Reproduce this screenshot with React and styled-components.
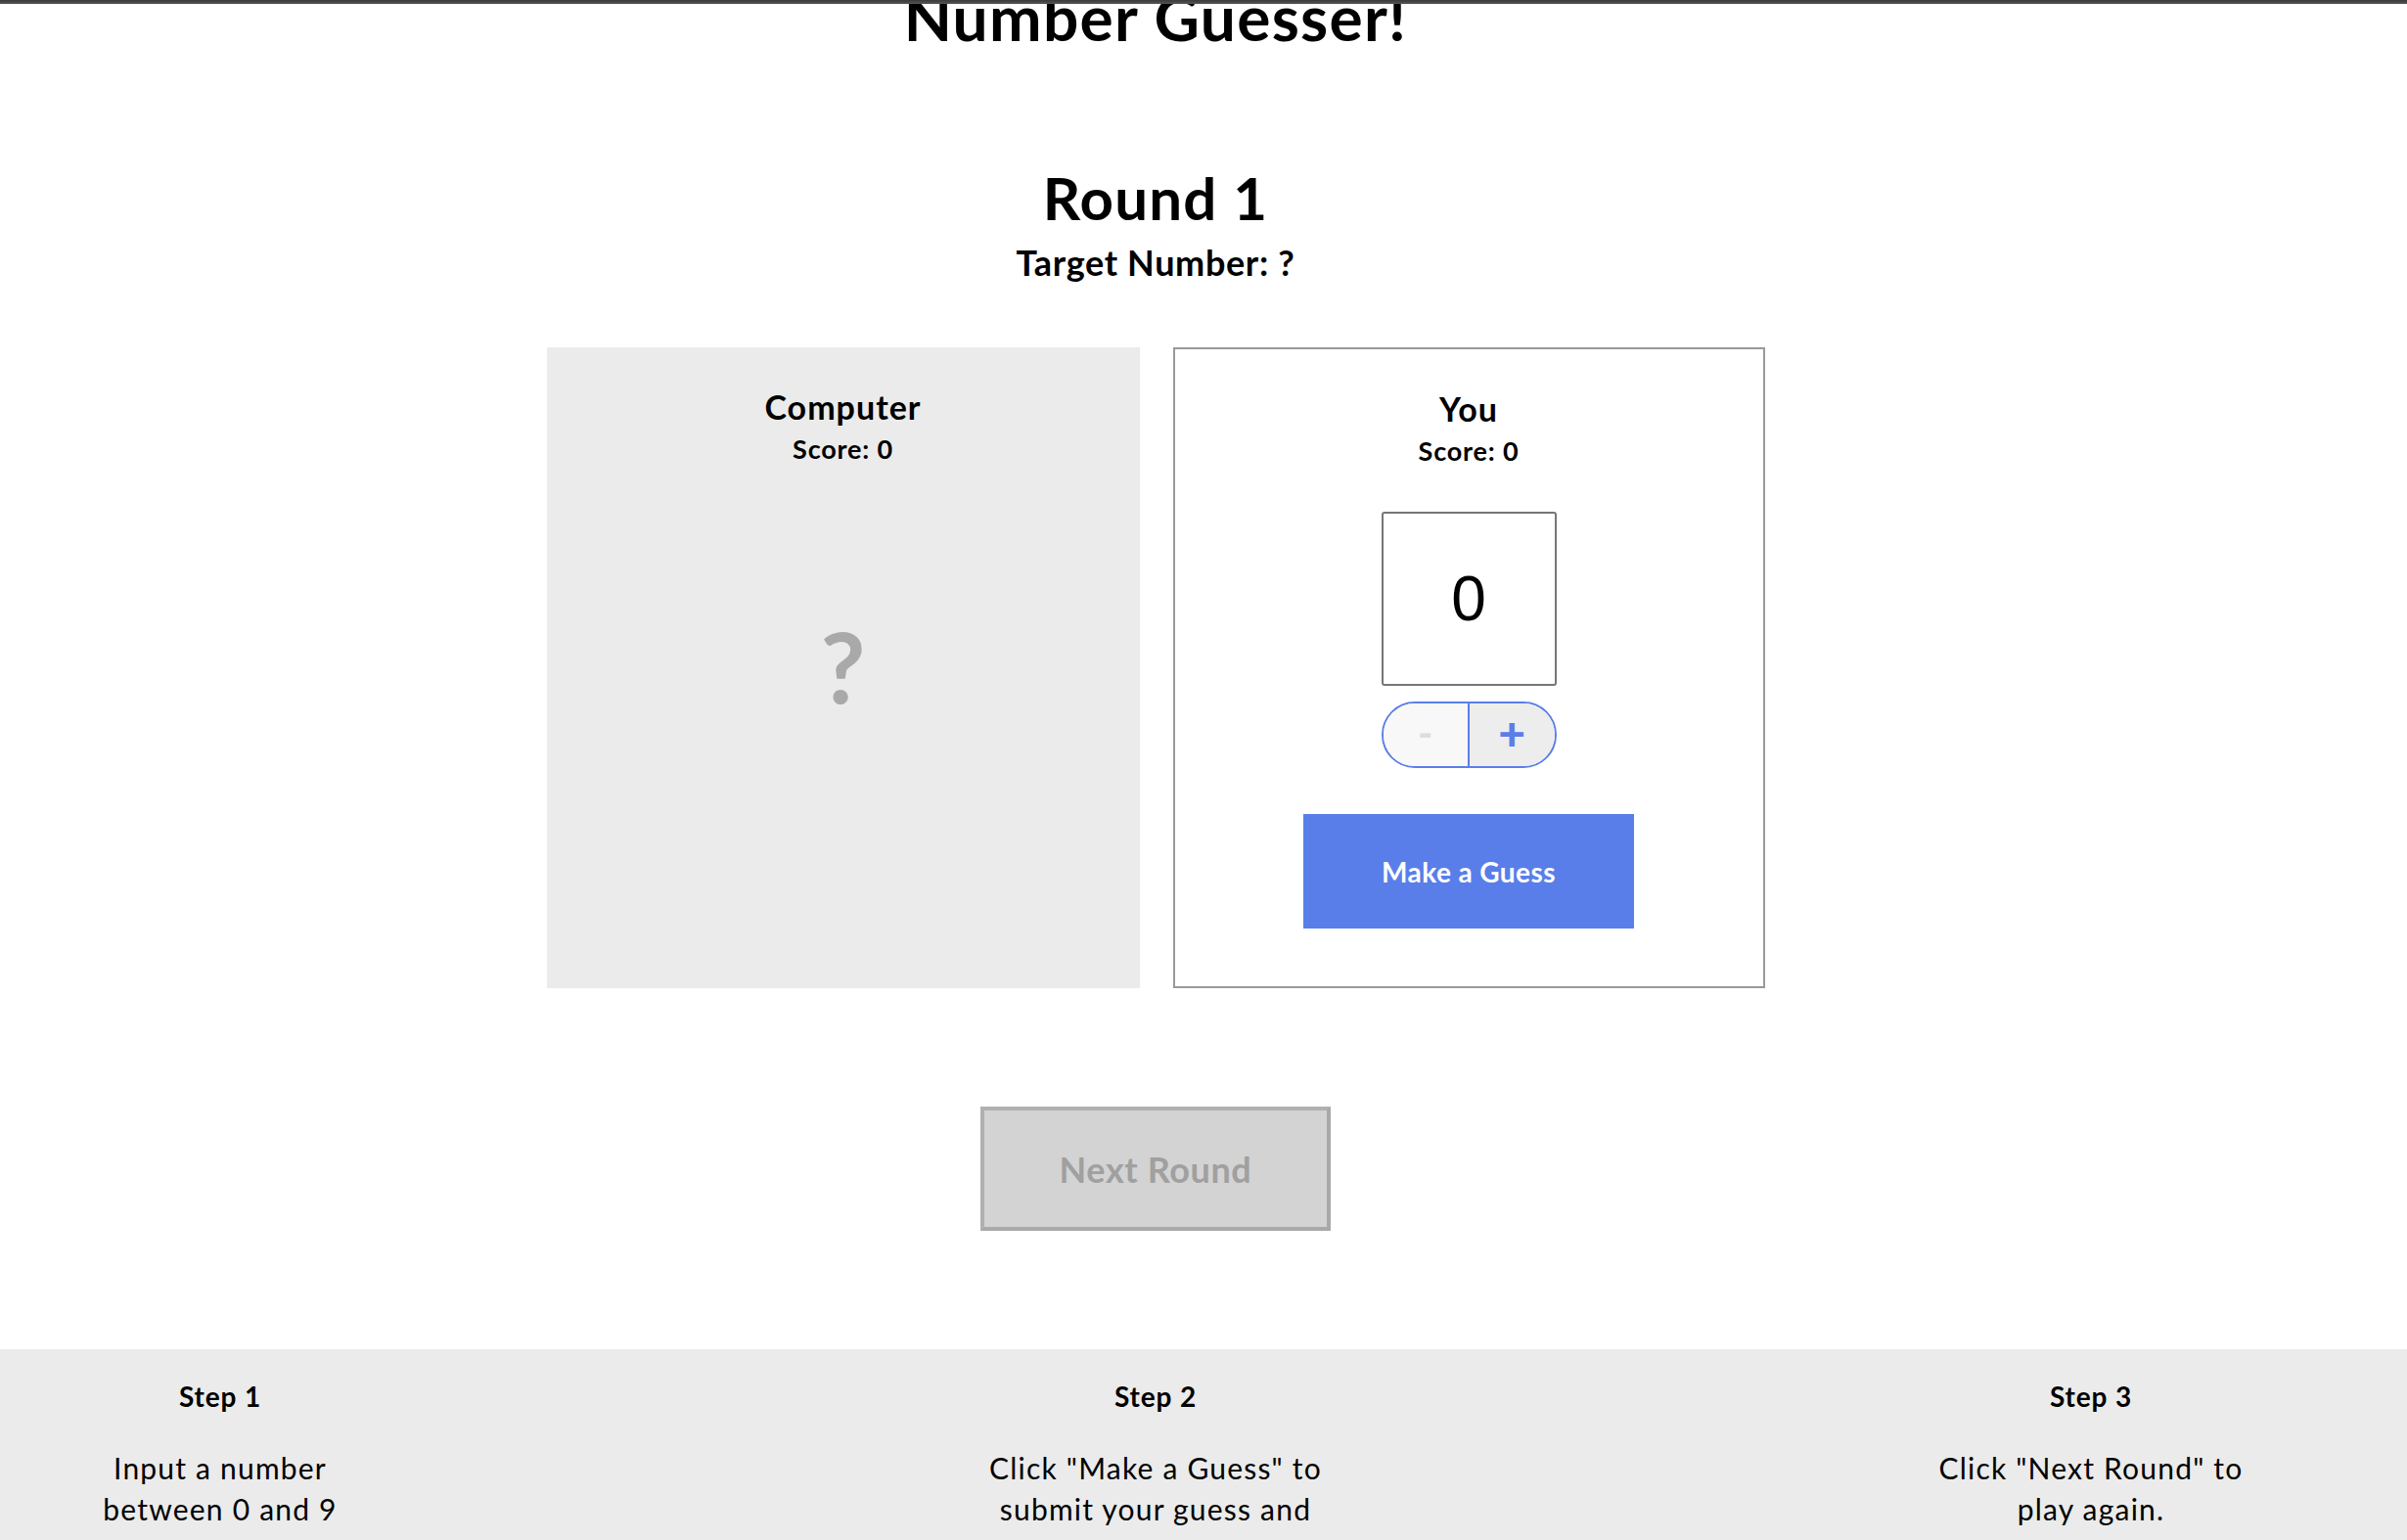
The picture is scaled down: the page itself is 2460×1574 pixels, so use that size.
import React from "react";
import styled, { createGlobalStyle } from "styled-components";

const GlobalStyle = createGlobalStyle`
  html, body {
    margin: 0;
    padding: 0;
    background: #ffffff;
    overflow: hidden;
  }
  body {
    font-family: "Lato", "Noto Sans", sans-serif;
    color: #000;
  }
  * { box-sizing: border-box; }
`;

const TopBar = styled.div`
  position: fixed;
  top: 0;
  left: 0;
  right: 0;
  height: 4px;
  background: linear-gradient(#3a3a3a, #555555);
  z-index: 10;
`;

const Page = styled.div`
  width: 2362px;
  display: flex;
  flex-direction: column;
  align-items: center;
  text-align: center;
`;

const Title = styled.h1`
  margin: -14px 0 0;
  font-size: 64px;
  line-height: 64px;
  font-weight: 700;
  letter-spacing: 0.02em;
`;

const RoundTitle = styled.h2`
  margin: 122px 0 0;
  font-size: 60px;
  line-height: 60px;
  font-weight: 700;
  letter-spacing: 0.02em;
`;

const Target = styled.h3`
  margin: 18px 0 0;
  font-size: 36px;
  line-height: 36px;
  font-weight: 700;
  letter-spacing: 0.018em;
`;

const Panels = styled.div`
  margin-top: 69px;
  display: flex;
  gap: 34px;
`;

const Panel = styled.section`
  width: ${(p) => (p.$outlined ? "605px" : "606px")};
  height: 655px;
  display: flex;
  flex-direction: column;
  align-items: center;
  background: ${(p) => (p.$outlined ? "#ffffff" : "#ebebeb")};
  border: ${(p) => (p.$outlined ? "2px solid #999999" : "none")};
  padding-top: 44px;
`;

const PlayerName = styled.h4`
  margin: 0;
  font-size: 34px;
  line-height: 34px;
  font-weight: 700;
  letter-spacing: 0.03em;
`;

const Score = styled.p`
  margin: 12px 0 0;
  font-size: 27px;
  line-height: 27px;
  font-weight: 700;
  letter-spacing: 0.03em;
`;

const Mystery = styled.div`
  margin-top: 158px;
  font-size: 100px;
  line-height: 100px;
  font-weight: 700;
  color: #a9a9a9;
`;

const NumberInput = styled.input`
  margin-top: 49px;
  width: 179px;
  height: 178px;
  border: 2px solid #767676;
  border-radius: 3px;
  background: #fff;
  font-family: "Liberation Sans", Arial, sans-serif;
  font-size: 64px;
  text-align: center;
  color: #000;
  padding: 0;
  appearance: textfield;
  -moz-appearance: textfield;
  &::-webkit-outer-spin-button,
  &::-webkit-inner-spin-button {
    -webkit-appearance: none;
    margin: 0;
  }
`;

const Stepper = styled.div`
  margin-top: 16px;
  width: 179px;
  height: 68px;
  border: 2px solid #5b7ee8;
  border-radius: 34px;
  overflow: hidden;
  display: flex;
`;

const StepButton = styled.button`
  flex: 1;
  border: none;
  margin: 0;
  padding: 0 0 4px;
  font-family: "Lato", "Noto Sans", sans-serif;
  font-size: ${(p) => (p.$disabled ? "40px" : "48px")};
  line-height: 1;
  font-weight: 900;
  background: ${(p) => (p.$disabled ? "#f8f8f8" : "#ededed")};
  color: ${(p) => (p.$disabled ? "#dddddd" : "#5b7ee8")};
  border-left: ${(p) => (p.$divider ? "2px solid #5b7ee8" : "none")};
  display: flex;
  align-items: center;
  justify-content: center;
`;

const GuessButton = styled.button`
  margin-top: 47px;
  width: 338px;
  height: 117px;
  border: none;
  background: #5a7ee9;
  color: #ffffff;
  font-family: "Lato", "Noto Sans", sans-serif;
  font-size: 28px;
  font-weight: 700;
  letter-spacing: 0.015em;
`;

const NextButton = styled.button`
  margin-top: 121px;
  width: 358px;
  height: 127px;
  border: 4px solid #a9a9a9;
  border-top-color: #b0b0b0;
  border-left-color: #b0b0b0;
  background: #d3d3d3;
  color: #a0a0a0;
  font-family: "Lato", "Noto Sans", sans-serif;
  font-size: 36px;
  font-weight: 700;
  letter-spacing: 0.017em;
`;

const Footer = styled.footer`
  margin-top: 121px;
  width: 2460px;
  align-self: flex-start;
  background: #ebebeb;
  height: 400px;
`;

const FooterInner = styled.div`
  width: 2362px;
  padding: 0 50px;
  display: flex;
  justify-content: space-between;
`;

const StepCol = styled.div`
  width: 350px;
  display: flex;
  flex-direction: column;
  align-items: center;
`;

const StepTitle = styled.h5`
  margin: 34px 0 0;
  font-size: 28px;
  line-height: 28px;
  font-weight: 700;
  letter-spacing: 0.03em;
`;

const StepText = styled.p`
  margin: 38px 0 0;
  width: 345px;
  font-size: 30px;
  line-height: 42px;
  font-weight: 400;
  letter-spacing: 0.04em;
`;

const steps = [
  { title: "Step 1", text: "Input a number between 0 and 9" },
  { title: "Step 2", text: 'Click "Make a Guess" to submit your guess and' },
  { title: "Step 3", text: 'Click "Next Round" to play again.' },
];

export default function App() {
  return (
    <>
      <GlobalStyle />
      <TopBar />
      <Page>
        <Title>Number Guesser!</Title>
        <RoundTitle>Round 1</RoundTitle>
        <Target>Target Number: ?</Target>
        <Panels>
          <Panel>
            <PlayerName>Computer</PlayerName>
            <Score>Score: 0</Score>
            <Mystery>?</Mystery>
          </Panel>
          <Panel $outlined>
            <PlayerName>You</PlayerName>
            <Score>Score: 0</Score>
            <NumberInput type="number" defaultValue={0} min={0} max={9} />
            <Stepper>
              <StepButton $disabled disabled>-</StepButton>
              <StepButton $divider>+</StepButton>
            </Stepper>
            <GuessButton>Make a Guess</GuessButton>
          </Panel>
        </Panels>
        <NextButton disabled>Next Round</NextButton>
        <Footer>
          <FooterInner>
            {steps.map((s) => (
              <StepCol key={s.title}>
                <StepTitle>{s.title}</StepTitle>
                <StepText>{s.text}</StepText>
              </StepCol>
            ))}
          </FooterInner>
        </Footer>
      </Page>
    </>
  );
}
